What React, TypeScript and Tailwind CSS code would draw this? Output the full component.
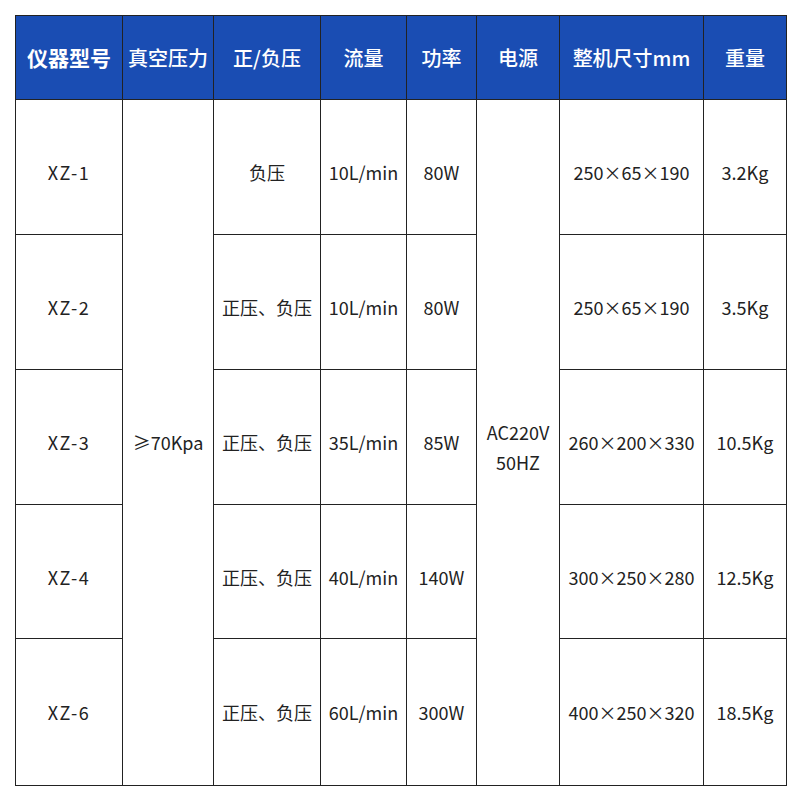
import React from 'react'

const headers = ['仪器型号', '真空压力', '正/负压', '流量', '功率', '电源', '整机尺寸mm', '重量']

interface Row {
    model: string;
    mode: string;
    flow: string;
    power: string;
    size: string;
    weight: string;
}

const rows: Row[] = [
    { model: 'XZ-1', mode: '负压', flow: '10L/min', power: '80W', size: '250×65×190', weight: '3.2Kg' },
    { model: 'XZ-2', mode: '正压、负压', flow: '10L/min', power: '80W', size: '250×65×190', weight: '3.5Kg' },
    { model: 'XZ-3', mode: '正压、负压', flow: '35L/min', power: '85W', size: '260×200×330', weight: '10.5Kg' },
    { model: 'XZ-4', mode: '正压、负压', flow: '40L/min', power: '140W', size: '300×250×280', weight: '12.5Kg' },
    { model: 'XZ-6', mode: '正压、负压', flow: '60L/min', power: '300W', size: '400×250×320', weight: '18.5Kg' },
]

const cell = 'bg-white flex items-center justify-center text-center text-[18px] text-[#222]'

export default function App() {
    return (
        <div className="w-[800px] h-[800px] bg-white p-[15px]" style={{ fontFamily: '"Noto Sans CJK SC", "Noto Sans", sans-serif' }}>
            <div className="grid w-[772px] border border-[#222] bg-[#222] gap-px grid-cols-[106px_90px_106px_85px_69px_82px_143px_82px] grid-rows-[83px_134px_134px_134px_133px_146px]">
                {headers.map((h, i) => (
                    <div
                        key={h}
                        className={`bg-[#1a4db3] flex items-center justify-center text-white ${i === 0 ? 'text-[21px] font-bold' : 'text-[20px] font-medium'}`}
                    >
                        {h}
                    </div>
                ))}
                {rows.map((r, i) => {
                    const pad = i < 4 ? 'pt-[11px]' : 'pt-0'
                    return (
                        <React.Fragment key={r.model}>
                            <div className={`${cell} ${pad} tracking-[1.5px]`}>{r.model}</div>
                            {i === 0 && (
                                <div className={`${cell} row-span-5`}>≥70Kpa</div>
                            )}
                            <div className={`${cell} ${pad}`}>{r.mode}</div>
                            <div className={`${cell} ${pad}`}>{r.flow}</div>
                            <div className={`${cell} ${pad}`}>{r.power}</div>
                            {i === 0 && (
                                <div className={`${cell} row-span-5 pt-[8px] leading-[30px]`}>
                                    AC220V
                                    <br />
                                    50HZ
                                </div>
                            )}
                            <div className={`${cell} ${pad}`}>{r.size}</div>
                            <div className={`${cell} ${pad}`}>{r.weight}</div>
                        </React.Fragment>
                    )
                })}
            </div>
        </div>
    )
}
